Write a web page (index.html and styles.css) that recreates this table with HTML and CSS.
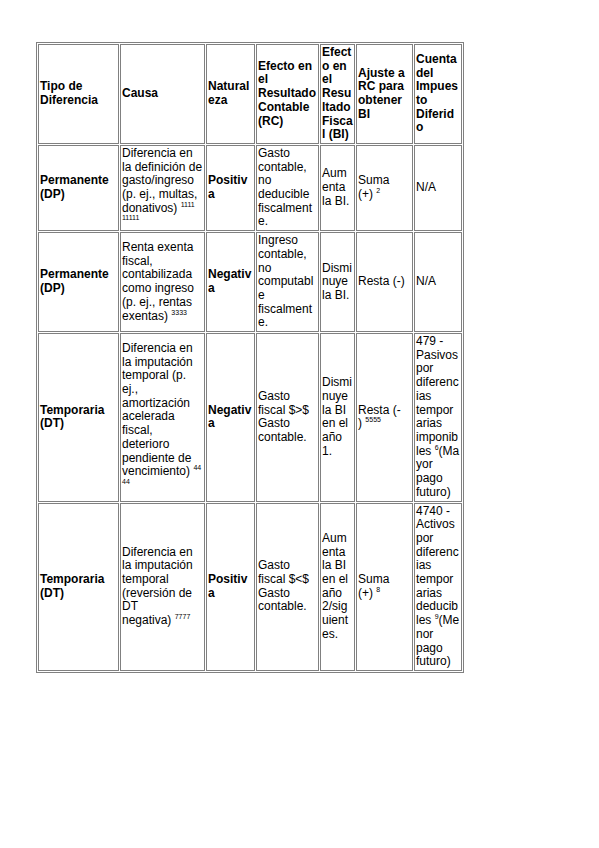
FILE: index.html
```html
<!DOCTYPE html>
<html lang="es">
<head>
<meta charset="utf-8">
<title>Tabla de diferencias</title>
<link rel="stylesheet" href="styles.css">
</head>
<body>
<table class="diff-table">
  <colgroup>
    <col class="c-tipo">
    <col class="c-causa">
    <col class="c-nat">
    <col class="c-rc">
    <col class="c-bi">
    <col class="c-ajuste">
    <col class="c-cuenta">
  </colgroup>
  <thead>
    <tr>
      <th>Tipo de Diferencia</th>
      <th>Causa</th>
      <th>Naturaleza</th>
      <th>Efecto en el Resultado Contable (RC)</th>
      <th>Efecto en el Resultado Fiscal (BI)</th>
      <th>Ajuste a RC para obtener BI</th>
      <th>Cuenta del Impuesto Diferido</th>
    </tr>
  </thead>
  <tbody>
    <tr>
      <td class="strong">Permanente (DP)</td>
      <td>Diferencia en la definición de gasto/ingreso (p. ej., multas, donativos)&nbsp;<sup>1111 11111</sup></td>
      <td class="strong">Positiva</td>
      <td>Gasto contable, no deducible fiscalmente.</td>
      <td>Aumenta la BI.</td>
      <td>Suma (+)&nbsp;<sup>2</sup></td>
      <td>N/A</td>
    </tr>
    <tr>
      <td class="strong">Permanente (DP)</td>
      <td>Renta exenta fiscal, contabilizada como ingreso (p. ej., rentas exentas)&nbsp;<sup>3333</sup></td>
      <td class="strong">Negativa</td>
      <td>Ingreso contable, no computable fiscalmente.</td>
      <td>Disminuye la BI.</td>
      <td>Resta (-)</td>
      <td>N/A</td>
    </tr>
    <tr>
      <td class="strong">Temporaria (DT)</td>
      <td>Diferencia en la imputación temporal (p. ej., amortización acelerada fiscal, deterioro pendiente de vencimiento)&nbsp;<sup>44 44</sup></td>
      <td class="strong">Negativa</td>
      <td>Gasto fiscal $&gt;$ Gasto contable.</td>
      <td>Disminuye la BI en el año 1.</td>
      <td>Resta (-<br>)&nbsp;<sup>5555</sup></td>
      <td>479 - Pasivos por diferencias temporarias imponibles&nbsp;<sup>6</sup>(Mayor pago futuro)</td>
    </tr>
    <tr>
      <td class="strong">Temporaria (DT)</td>
      <td>Diferencia en la imputación temporal (reversión de DT negativa)&nbsp;<sup>7777</sup></td>
      <td class="strong">Positiva</td>
      <td>Gasto fiscal $&lt;$ Gasto contable.</td>
      <td>Aumenta la BI en el año 2/siguientes.</td>
      <td>Suma (+)&nbsp;<sup>8</sup></td>
      <td>4740 - Activos por diferencias temporarias deducibles&nbsp;<sup>9</sup>(Menor pago futuro)</td>
    </tr>
  </tbody>
</table>
</body>
</html>
```
FILE: styles.css
```css
html, body {
  background: #ffffff;
}
body {
  margin: 8px;
  font-family: "Liberation Sans", Arial, sans-serif;
  font-size: 12px;
  color: #000000;
}
.diff-table {
  margin: 34px 0 0 28px;
  table-layout: fixed;
  width: 427.5px;
  border: 1px solid #808080;
  border-collapse: separate;
  border-spacing: 1px;
  font-size: 12px;
  line-height: 13.7px;
}
.c-tipo { width: 81px; }
.c-causa { width: 85px; }
.c-nat { width: 49px; }
.c-rc { width: 63px; }
.c-bi { width: 35px; }
.c-ajuste { width: 57px; }
.c-cuenta { width: 47.5px; }
.diff-table th,
.diff-table td {
  border: 1px solid #808080;
  padding: 1px;
  vertical-align: middle;
  text-align: left;
  overflow-wrap: anywhere;
  word-break: normal;
}
.diff-table th {
  font-weight: bold;
}
.diff-table td.strong {
  font-weight: bold;
}
.diff-table sup {
  font-size: 7px;
  line-height: 0;
  vertical-align: super;
}
```
